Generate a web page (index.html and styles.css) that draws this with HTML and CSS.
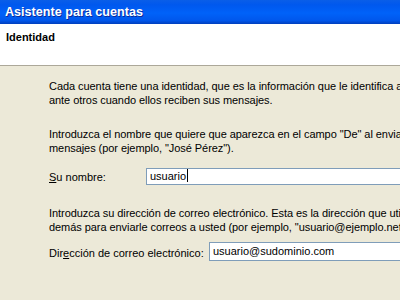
FILE: index.html
```html
<!DOCTYPE html>
<html lang="es">
  <head>
    <meta charset="UTF-8" />
    <title>Asistente para cuentas</title>
    <link rel="stylesheet" href="styles.css">
  </head>
  <body>
    <div class="window">
      <div class="titlebar">Asistente para cuentas</div>

      <div class="header">Identidad</div>

      <div class="content">
        <p>Cada cuenta tiene una identidad, que es la información que le identifica a usted<br>ante otros cuando ellos reciben sus mensajes.</p>

        <p class="gap">Introduzca el nombre que quiere que aparezca en el campo "De" al enviar sus<br>mensajes (por ejemplo, "José Pérez").</p>

        <div class="field name-field">
          <label class="label"><u>S</u>u nombre:</label>
          <div class="textbox">usuario<span class="caret"></span></div>
        </div>

        <p class="gap-small">Introduzca su dirección de correo electrónico. Esta es la dirección que utilizarán los<br>demás para enviarle correos a usted (por ejemplo, "usuario@ejemplo.net").</p>

        <div class="field mail-field">
          <label class="label">Dir<u>e</u>cción de correo electrónico:</label>
          <div class="textbox">usuario@sudominio.com</div>
        </div>
      </div>
    </div>
  </body>
</html>
```

FILE: styles.css
```css
body {
  margin: 0;
  width: 400px;
  height: 300px;
  overflow: hidden;
  background-color: #ece9d8;
  font-family: "Liberation Sans", Arial, sans-serif;
  font-size: 11px;
  color: #000;
}
.window {
  width: 520px;
}
.titlebar {
  height: 24px;
  box-sizing: border-box;
  padding: 5px 0 0 5px;
  line-height: 14px;
  font-size: 12.6px;
  font-weight: bold;
  color: #fff;
  text-shadow: 1px 1px #0c2a9a;
  white-space: nowrap;
  background: linear-gradient(to bottom, #0a5ee8 0%, #0058ee 20%, #0062f9 55%, #0057ec 85%, #003fbd 100%);
}
.header {
  height: 42px;
  box-sizing: border-box;
  padding: 6px 0 0 6px;
  line-height: 14px;
  font-weight: bold;
  background-color: #fff;
  border-bottom: 1px solid #aca899;
}
.content {
  padding: 13px 0 0 49px;
  white-space: nowrap;
}
p {
  margin: 0;
  line-height: 14px;
  letter-spacing: -0.06px;
}
.gap {
  margin-top: 20px;
}
.gap-small {
  margin-top: 21px;
}
.field {
  display: flex;
  align-items: center;
}
.name-field {
  margin-top: 13px;
}
.name-field .label {
  width: 97px;
}
.mail-field {
  margin-top: 8px;
}
.mail-field .label {
  width: 160px;
  padding-top: 2px;
}
.label {
  line-height: 14px;
  flex-shrink: 0;
}
.textbox {
  flex: 1;
  height: 17px;
  box-sizing: border-box;
  padding: 0 3px;
  line-height: 15px;
  background-color: #fff;
  border: 1px solid #7f9db9;
}
.mail-field .textbox {
  height: 19px;
  line-height: 17px;
}
.caret {
  display: inline-block;
  width: 1px;
  height: 13px;
  margin-left: 1px;
  vertical-align: -2px;
  background-color: #000;
}
```
